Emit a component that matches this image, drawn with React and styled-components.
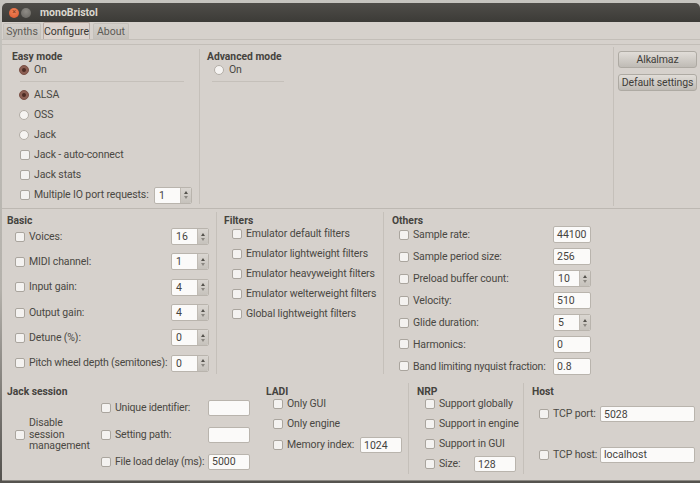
import React from "react";
import styled, { createGlobalStyle } from "styled-components";

const Global = createGlobalStyle`
  html, body { margin: 0; padding: 0; background: #a9a6a0; overflow: hidden; }
  * { box-sizing: border-box; }
`;

const Desktop = styled.div`
  width: 700px; height: 483px; padding: 3px 0 2px 2px;
  background: linear-gradient(#c6c4bf 0, #b4b1ab 60%, #55534f 99%);
  font-family: Roboto, "Open Sans", sans-serif;
  font-size: 10.5px; color: #4a4843;
`;
const Win = styled.div`
  width: 698px; height: 478px; display: flex; flex-direction: column;
  background: #d6d1cc; border-radius: 5px 5px 0 0; overflow: hidden;
  border-bottom: 1px solid #8d8a84;
`;
const TitleBar = styled.div`
  height: 19px; flex: none; display: flex; align-items: center; padding-left: 7px;
  background: linear-gradient(#4f4d49, #3c3b37);
`;
const WinBtn = styled.span`
  width: 10px; height: 10px; border-radius: 50%; margin-right: 2px; flex: none;
  display: flex; align-items: center; justify-content: center;
  font-size: 7px; line-height: 1; color: #7a3517;
  background: ${p => p.$close ? "radial-gradient(circle at 50% 35%, #f0865c, #d9552b)" : "radial-gradient(circle at 50% 35%, #8f8c86, #66645f)"};
`;
const WinTitle = styled.span`
  margin-left: 7px; font-weight: 700; font-size: 10.5px; color: #dcd8cf;
`;
const TabBar = styled.div`
  height: 18px; flex: none; display: flex; align-items: flex-end; padding-left: 1px; gap: 2px;
  border-bottom: 1px solid #c3beb8;
`;
const Tab = styled.div`
  height: ${p => p.$on ? 17 : 16}px; width: ${p => p.$w}px; display: flex; align-items: center; justify-content: center;
  margin-left: ${p => p.$ml || 0}px;
  color: ${p => p.$on ? "#3a3834" : "#5c5a55"};
  background: ${p => p.$on ? "#dcd3cd" : "linear-gradient(#d3cfca, #c4c0ba)"};
  border: 1px solid ${p => p.$on ? "#b9aaa2" : "#c4c0ba"}; border-bottom: 0; border-radius: 2px 2px 0 0;
`;
const TopRule = styled.div`
  height: 5px; flex: none; border-bottom: 1px solid #c3beb8;
`;
const TopSection = styled.section`
  height: 164px; flex: none; display: flex; border-bottom: 1px solid #bdb8b2;
`;
const MiddleSection = styled.section`
  height: 170px; flex: none; display: flex;
`;
const BottomSection = styled.section`
  flex: 1; display: flex;
`;
const Column = styled.div`
  width: ${p => p.$w}px; flex: none;
  padding: ${p => p.$top ?? 5}px ${p => p.$pr || 0}px 0 ${p => p.$pl || 0}px;
`;
const VRule = styled.div`
  width: 1px; flex: none; background: #c5c0ba;
  margin: ${p => p.$mt || 0}px 0 ${p => p.$mb || 0}px;
`;
const Heading = styled.div`
  height: 14px; line-height: 14px; font-weight: 700; font-size: 10.3px; color: #45433e;
  margin-bottom: ${p => p.$after ?? -4}px;
`;
const Rows = styled.div`
  padding-left: ${p => p.$indent}px;
  flex: ${p => p.$fill ? 1 : "none"};
`;
const Row = styled.div`
  height: ${p => p.$h}px; display: flex; align-items: center; white-space: nowrap;
`;
const HRule = styled.div`
  height: 1px; background: #c5c0ba; margin: 5px 0 3px ${p => p.$ml}px; width: ${p => p.$w}px;
`;
const Check = styled.span`
  width: 10px; height: 10px; flex: none; border-radius: 2px; background: #f4f2f0;
  border: 1px solid #aaa59e;
`;
const Radio = styled.span`
  width: 10px; height: 10px; flex: none; border-radius: 50%; margin-left: -1px; margin-right: 1px;
  display: flex; align-items: center; justify-content: center;
  background: ${p => p.$on ? "#8c5f53" : "#f6f4f2"};
  border: 1px solid ${p => p.$on ? "#7c5146" : "#b3aea7"};
  &::after { content: ""; width: 4px; height: 4px; border-radius: 50%; background: ${p => p.$on ? "#4d2c24" : "transparent"}; }
`;
const Label = styled.span`
  margin-left: 4px; flex: none; line-height: 11.5px;
  letter-spacing: ${p => p.$tight ? -0.2 : -0.12}px;
  white-space: ${p => p.$wrap ? "normal" : "nowrap"}; width: ${p => p.$w ? p.$w + "px" : "auto"};
`;
const InputBox = styled.div`
  width: ${p => p.$w}px; height: ${p => p.$h || 17}px; flex: none; margin-left: auto;
  background: #fbfaf9; border: 1px solid #b9b4ad; border-radius: 2px;
  display: flex; align-items: center; padding-left: 3px; color: #45433e;
`;
const SpinBox = styled(InputBox)`
  padding-left: 4px; justify-content: space-between; overflow: hidden;
`;
const SpinButtons = styled.span`
  width: 11px; height: 100%; flex: none; display: flex; flex-direction: column; align-items: center;
  justify-content: center; gap: 2px; background: linear-gradient(#dad6d1, #c6c2bc);
  border-left: 1px solid #c0bbb4;
`;
const Arrow = styled.span`
  width: 0; height: 0; border-left: 2px solid transparent; border-right: 2px solid transparent;
  ${p => p.$down ? "border-top: 3px solid #8a8781;" : "border-bottom: 3px solid #55534e;"}
`;
const SideButtons = styled.div`
  flex: 1; display: flex; flex-direction: column; gap: 6px; padding: 6px 1px 0 4px;
`;
const Button = styled.button`
  height: 17px; width: 79px; padding: 0; font: inherit; letter-spacing: -.15px; color: #3f3d39; white-space: nowrap;
  border: 1px solid #aeaaa3; border-radius: 3px; background: linear-gradient(#e1ddd8, #bfbbb5);
`;
const JackBody = styled.div`
  display: flex; margin-top: -5px;
`;
const JackLeft = styled.div`
  width: 94px; flex: none; padding-left: 8px; display: flex; align-items: center;
`;

const Spin = ({ v, w = 38, h }) => (
  <SpinBox $w={w} $h={h}>
    {v}
    <SpinButtons><Arrow /><Arrow $down /></SpinButtons>
  </SpinBox>
);
const CheckRow = ({ h, label, tight, children }) => (
  <Row $h={h}><Check /><Label $tight={tight}>{label}</Label>{children}</Row>
);
const RadioRow = ({ h, label, on }) => (
  <Row $h={h}><Radio $on={on} /><Label>{label}</Label></Row>
);

const basic = [["Voices:", "16"], ["MIDI channel:", "1"], ["Input gain:", "4"], ["Output gain:", "4"], ["Detune (%):", "0"], ["Pitch wheel depth (semitones):", "0"]];
const filters = ["Emulator default filters", "Emulator lightweight filters", "Emulator heavyweight filters", "Emulator welterweight filters", "Global lightweight filters"];
const others = [["Sample rate:", "44100"], ["Sample period size:", "256"], ["Preload buffer count:", "10", true], ["Velocity:", "510"], ["Glide duration:", "5", true], ["Harmonics:", "0"], ["Band limiting nyquist fraction:", "0.8"]];

export default function App() {
  return (
    <Desktop>
      <Global />
      <Win>
        <TitleBar>
          <WinBtn $close>×</WinBtn>
          <WinBtn />
          <WinTitle>monoBristol</WinTitle>
        </TitleBar>
        <TabBar>
          <Tab $w={38}>Synths</Tab>
          <Tab $w={47} $on>Configure</Tab>
          <Tab $w={36} $ml={1}>About</Tab>
        </TabBar>
        <TopRule />
        <TopSection>
          <Column $w={197} $pl={10} $pr={7}>
            <Heading $after={0}>Easy mode</Heading>
            <Rows $indent={8}>
              <RadioRow h={12} label="On" on />
              <HRule $ml={0} $w={164} />
              <RadioRow h={20} label="ALSA" on />
              <RadioRow h={20} label="OSS" />
              <RadioRow h={20} label="Jack" />
              <CheckRow h={20} label="Jack - auto-connect" />
              <CheckRow h={20} label="Jack stats" />
              <CheckRow h={20} label="Multiple IO port requests:"><Spin v="1" /></CheckRow>
            </Rows>
          </Column>
          <VRule $mt={4} $mb={4} />
          <Column $w={413} $pl={7}>
            <Heading $after={0}>Advanced mode</Heading>
            <Rows $indent={8}>
              <RadioRow h={12} label="On" />
              <HRule $ml={-3} $w={72} />
            </Rows>
          </Column>
          <VRule $mt={2} $mb={2} />
          <SideButtons>
            <Button>Alkalmaz</Button>
            <Button>Default settings</Button>
          </SideButtons>
        </TopSection>
        <MiddleSection>
          <Column $w={214} $pl={5} $pr={7}>
            <Heading>Basic</Heading>
            <Rows $indent={8}>
              {basic.map(([l, v], i) => <CheckRow key={l} h={25.3} label={l} tight={i === 5}><Spin v={v} /></CheckRow>)}
            </Rows>
          </Column>
          <VRule $mt={3} $mb={5} />
          <Column $w={166} $pl={7}>
            <Heading>Filters</Heading>
            <Rows $indent={8}>
              {filters.map(l => <CheckRow key={l} h={20} label={l} />)}
            </Rows>
          </Column>
          <VRule $mt={3} $mb={5} />
          <Column $w={207} $pl={8}>
            <Heading>Others</Heading>
            <Rows $indent={7}>
              {others.map(([l, v, spin], i) => (
                <CheckRow key={l} h={21.9} label={l} tight={i === 6}>
                  {spin ? <Spin v={v} /> : <InputBox $w={38}>{v}</InputBox>}
                </CheckRow>
              ))}
            </Rows>
          </Column>
        </MiddleSection>
        <BottomSection>
          <Column $w={256} $pl={5} $pr={8} $top={6}>
            <Heading $after={0}>Jack session</Heading>
            <JackBody>
              <JackLeft>
                <Check />
                <Label $wrap $w={66}>Disable session management</Label>
              </JackLeft>
              <Rows $indent={0} $fill>
                {[["Unique identifier:", ""], ["Setting path:", ""], ["File load delay (ms):", "5000"]].map(([l, v]) => (
                  <CheckRow key={l} h={27} label={l} tight><InputBox $w={42} $h={16}>{v}</InputBox></CheckRow>
                ))}
              </Rows>
            </JackBody>
          </Column>
          <Column $w={150} $pl={8} $pr={6} $top={6}>
            <Heading $after={-5}>LADI</Heading>
            <Rows $indent={7}>
              <CheckRow h={20} label="Only GUI" />
              <CheckRow h={20} label="Only engine" />
              <CheckRow h={22} label="Memory index:"><InputBox $w={42} $h={16}>1024</InputBox></CheckRow>
            </Rows>
          </Column>
          <VRule $mt={4} $mb={6} />
          <Column $w={114} $pl={8} $pr={7} $top={6}>
            <Heading $after={-5}>NRP</Heading>
            <Rows $indent={8}>
              <CheckRow h={20} label="Support globally" />
              <CheckRow h={20} label="Support in engine" />
              <CheckRow h={20} label="Support in GUI" />
              <CheckRow h={20} label="Size:"><InputBox $w={42} $h={16}>128</InputBox></CheckRow>
            </Rows>
          </Column>
          <VRule $mt={4} $mb={6} />
          <Column $w={173} $pl={8} $pr={2} $top={6}>
            <Heading $after={-5}>Host</Heading>
            <Rows $indent={7}>
              <CheckRow h={40} label="TCP port:"><InputBox $w={95} $h={16}>5028</InputBox></CheckRow>
              <CheckRow h={41} label="TCP host:"><InputBox $w={95} $h={16}>localhost</InputBox></CheckRow>
            </Rows>
          </Column>
        </BottomSection>
      </Win>
    </Desktop>
  );
}
